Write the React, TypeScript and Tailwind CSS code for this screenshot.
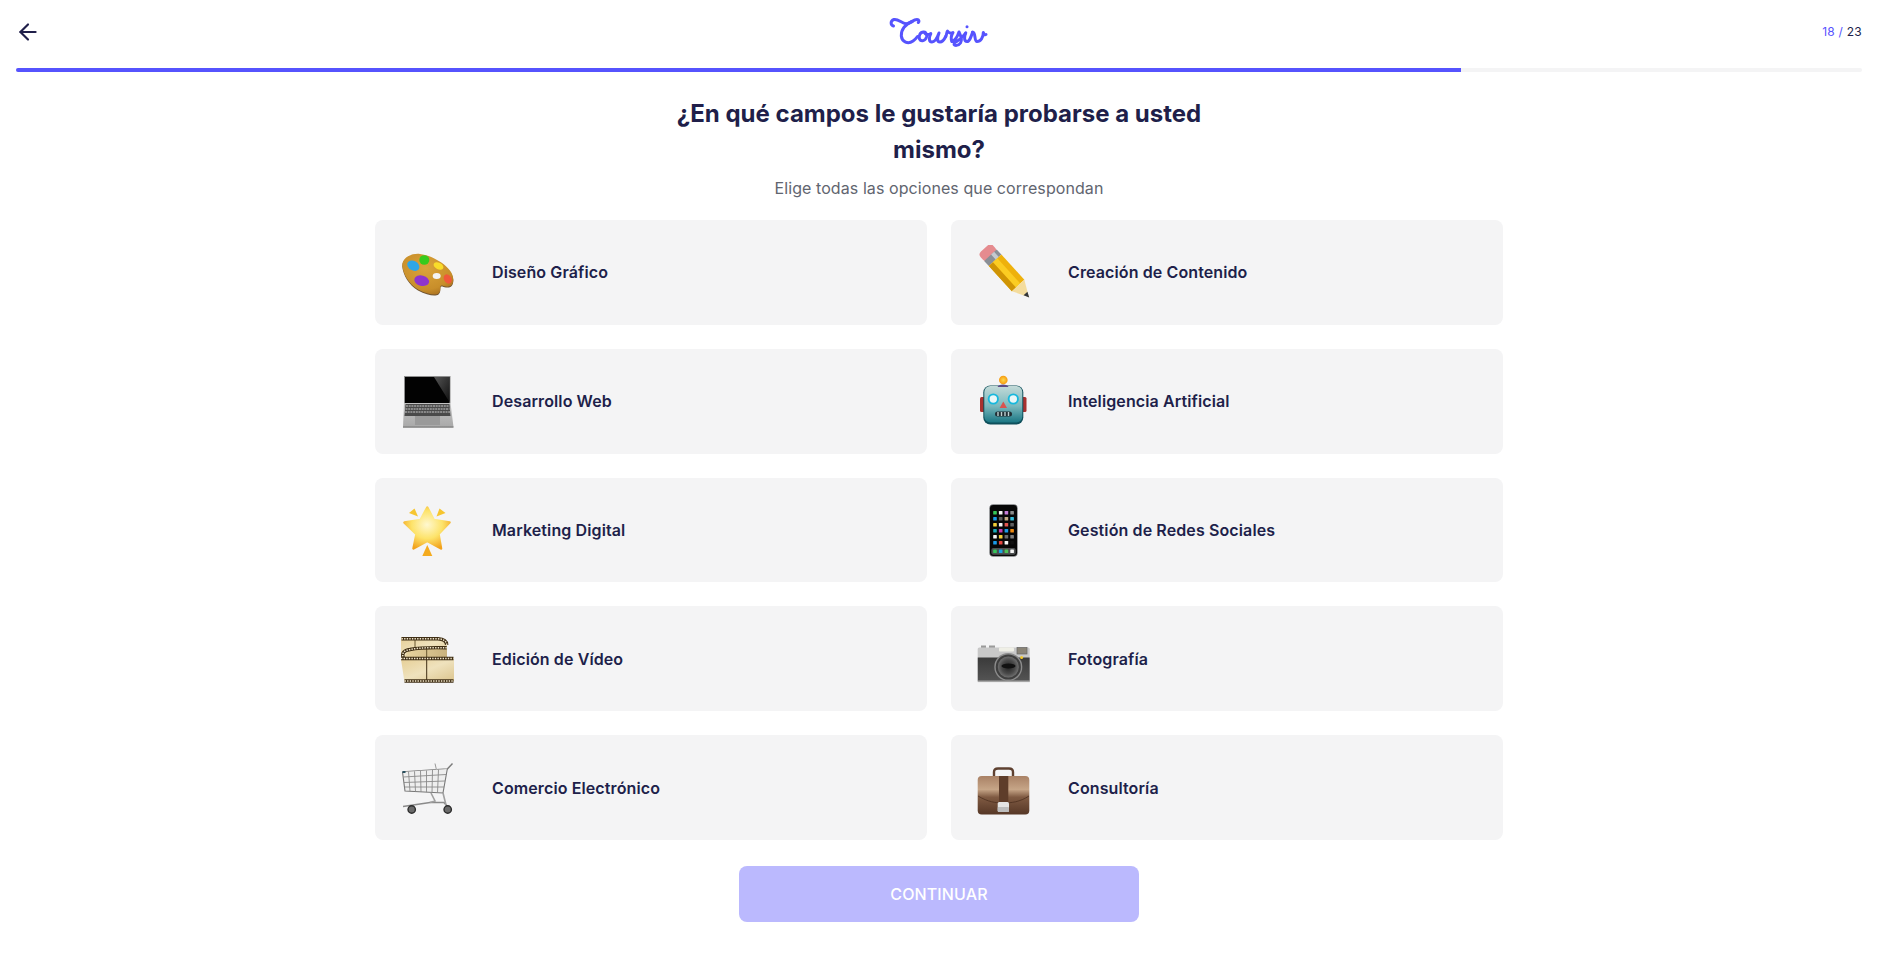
import type { ReactNode } from "react"
import { ArrowLeft } from "lucide-react"

function Logo() {
  return (
    <svg className="-mt-0.5" width="100" height="34" viewBox="0 0 100 34" fill="none" stroke="#5653fe" strokeWidth="3" strokeLinecap="round" strokeLinejoin="round" role="img" aria-label="Coursiv">
      <path d="M4.500 12C1.500 11 1 7 5 5.500C9 4.500 13 9.500 17 9.700C21 9.900 24 5.500 28 5.500C30 5.500 30.500 7.500 29.300 8.500" />
      <path d="M23.300 7.500C16 10 12 16 12.300 22C13 28 19 30.500 24 27C26 25.500 27.500 24 28.500 22.500" />
      <path d="M34.500 18C31 18 29.500 22 30.500 25C32 28 36.500 27 37.500 23C38 20.500 37 18 35 18C36.500 21 39.500 21 41.700 19.700" />
      <path d="M41.700 19.700C40 23 39.500 28 43 28C46 28 48.500 23 50 19C48.500 23 47.500 28 51 28C53.500 28 55.500 25 56.700 22.500" />
      <path d="M56.700 22.500C58 20 57.500 18 58.500 17C60 19.500 62.500 19.500 64 18.500C62.500 21 61.500 24.500 63 27.500" />
      <path d="M63 27.500C66 26.500 68.500 22.500 70 18C72 22 73.500 26 71.500 29C69.500 32 65 32 65 30C65 28 71 27.500 76.700 19" />
      <path d="M76.700 19C75 23 75 27.500 78 27.500C80.500 27.500 82 23 83.500 18.500" />
      <path d="M83.500 18C87 18 85 27.500 88 27.500C91.500 27.500 94.500 23.500 94.300 18.500C95 20.500 96 21 97 20.500" />
      <circle cx="78" cy="12.800" r="1.500" fill="#5653fe" stroke="none" />
    </svg>
  )
}

function Palette() {
  const outline = "M2.300 20.500C2 13 11 8 20 9C33 10.500 53 22 53.300 34C53.500 40 50 42.500 46 41.500C43 41 41 39.500 40.500 41.500C40 44 41 46 38.500 48.500C35 51 27 49 18 44.500C9 39 3 29 2.300 20.500Z"
  return (
    <svg width="54" height="54" viewBox="0 0 54 54">
      <defs>
        <radialGradient id="pal" cx=".45" cy=".35" r=".7">
          <stop offset="0" stopColor="#dba43a" />
          <stop offset=".75" stopColor="#c88e2a" />
          <stop offset="1" stopColor="#a9701f" />
        </radialGradient>
      </defs>
      <path d={outline} fill="#6f5433" transform="translate(0 .9)" />
      <path d={outline} fill="url(#pal)" />
      <ellipse cx="13.300" cy="20.700" rx="6.500" ry="4.800" fill="#2ea6e6" transform="rotate(30 13.300 20.700)" />
      <ellipse cx="24.300" cy="15" rx="5" ry="4.800" fill="#37cb1c" />
      <ellipse cx="38.500" cy="21" rx="5.200" ry="3.300" fill="#f9dc2a" transform="rotate(25 38.500 21)" />
      <ellipse cx="21.700" cy="35.700" rx="7.500" ry="5.200" fill="#8e35cc" transform="rotate(15 21.700 35.700)" />
      <ellipse cx="47.700" cy="34" rx="3.700" ry="5" fill="#f0583a" transform="rotate(-30 47.700 34)" />
      <ellipse cx="36.700" cy="31" rx="4" ry="3" fill="#f4f4f5" />
    </svg>
  )
}

function Pencil() {
  return (
    <svg width="54" height="54" viewBox="0 0 54 54">
      <g transform="translate(11 6.500) rotate(47.500)">
        <rect x="-4" y="-8.500" width="11" height="17" rx="4" fill="#e58b8f" />
        <rect x="5" y="-8.500" width="7" height="17" fill="#8a8f96" />
        <rect x="5" y="-5" width="7" height="4" fill="#c4c9cf" />
        <path d="M12 -8.500H46V8.500H12Z" fill="#eeb10c" />
        <path d="M12 -3H46V3H12Z" fill="#fbcc22" />
        <path d="M12 3H46V8.500H12Z" fill="#cf9405" />
        <path d="M46 -8.500L62 0L46 8.500Z" fill="#f4dc9d" />
        <path d="M57 -2.600L62.500 0L57 2.600Z" fill="#33363b" />
      </g>
    </svg>
  )
}

function Laptop() {
  return (
    <svg width="54" height="54" viewBox="0 0 54 54">
      <defs>
        <linearGradient id="deck" x1="0" y1="0" x2="0" y2="1">
          <stop offset="0" stopColor="#c4c4c4" />
          <stop offset="1" stopColor="#a9a9a9" />
        </linearGradient>
        <linearGradient id="glare" x1="0" y1="0" x2="1" y2="1">
          <stop offset="0" stopColor="#555" />
          <stop offset="1" stopColor="#111" />
        </linearGradient>
      </defs>
      <rect x="4" y="2" width="46.500" height="27" fill="#8f8f8f" />
      <rect x="5" y="3" width="44.500" height="26" fill="#020202" />
      <path d="M34 3H49.500V28Z" fill="url(#glare)" />
      <path d="M4 29H50.500L53.500 53H3Z" fill="url(#deck)" />
      <path d="M5.500 30H49.500L50.500 42H4.500Z" fill="#4a4a4a" />
      <path d="M6 32H49M5.500 35H49.500M5 38H50" stroke="#c9c9c9" strokeWidth="1" strokeDasharray="2 .7" />
      <rect x="15" y="42" width="25" height="9" fill="#9a9a9a" />
      <rect x="3" y="52.500" width="50.500" height="1.200" fill="#777" />
    </svg>
  )
}

function Robot() {
  return (
    <svg width="54" height="54" viewBox="0 0 54 54">
      <defs>
        <linearGradient id="head" x1="0" y1="0" x2="0" y2="1">
          <stop offset="0" stopColor="#c3dad8" />
          <stop offset=".55" stopColor="#7ab8bd" />
          <stop offset="1" stopColor="#1a7683" />
        </linearGradient>
        <radialGradient id="ball">
          <stop offset="0" stopColor="#ffd84a" />
          <stop offset="1" stopColor="#f59a10" />
        </radialGradient>
      </defs>
      <rect x="4" y="23" width="5" height="15" rx="1.500" fill="#a8312f" />
      <rect x="45.500" y="23" width="5" height="15" rx="1.500" fill="#a8312f" />
      <rect x="7.300" y="11.500" width="40" height="39" rx="7" fill="#0e4f5b" />
      <rect x="8.300" y="12" width="38" height="36.500" rx="6" fill="url(#head)" />
      <path d="M21.500 13C22 9.500 32 9.500 32.500 13Z" fill="#5d4a87" />
      <circle cx="27.300" cy="6" r="4.300" fill="url(#ball)" />
      <circle cx="17.300" cy="25" r="5.600" fill="#16b8dd" />
      <circle cx="37.300" cy="25" r="5.600" fill="#16b8dd" />
      <circle cx="17.300" cy="25" r="3.700" fill="#e9f7f8" />
      <circle cx="37.300" cy="25" r="3.700" fill="#e9f7f8" />
      <path d="M27.300 27.500L31 34H23.600Z" fill="#d9534f" />
      <rect x="19" y="37.500" width="17" height="5" rx="2.500" fill="#222f35" />
      <path d="M22 38V42M25.500 38V42M29 38V42M32.500 38V42" stroke="#bcd0d2" strokeWidth="1.400" />
    </svg>
  )
}

function Star() {
  return (
    <svg width="54" height="54" viewBox="0 0 54 54">
      <defs>
        <radialGradient id="star" cx=".5" cy=".42" r=".62">
          <stop offset="0" stopColor="#fff8d0" />
          <stop offset=".55" stopColor="#fde36a" />
          <stop offset="1" stopColor="#f2a21c" />
        </radialGradient>
      </defs>
      <path d="M27.300 4.500L33.800 17L49.500 19.500L38.500 31L41 45.500L27.300 38L13.500 45.500L16.500 31L4.500 19.500L20.500 17Z" fill="url(#star)" stroke="url(#star)" strokeWidth="2.500" strokeLinejoin="round" />
      <path d="M9 10L14.500 5.500L18 13.500Z" fill="#f6c52f" />
      <path d="M36.500 13.500L39.500 5.500L45.500 10Z" fill="#f6c52f" />
      <path d="M27.300 42L32.300 53H22.300Z" fill="#f4ab1f" />
    </svg>
  )
}

function Phone() {
  const rows = [
    ["#35c659", "#f5f5f5", "#c77dd8", "#8b8b8b"],
    ["#1b9ae8", "#5c5c5c", "#c4ab85", "#35bcd8"],
    ["#f4cf38", "#f5f5f5", "#e2554d", "#5f5f5f"],
    ["#19a9b8", "#c43bb0", "#1b9ae8", "#ee8a12"],
    ["#f5f5f5", "#f4cf38", "#6d6d6d", "#7d7d7d"],
    ["#1b9ae8", "#e2453f", "#f5f5f5", "#111111"],
  ]
  const dock = ["#35c659", "#1ba7e0", "#4cc455", "#f5f5f5"]
  const xs = [17.200, 22.900, 28.600, 34.300]
  return (
    <svg width="54" height="54" viewBox="0 0 54 54">
      <rect x="13.300" y="1.300" width="28.400" height="52.400" rx="4" fill="#77797c" />
      <rect x="14" y="2" width="27" height="51" rx="3.400" fill="#070707" />
      {rows.map((row, r) =>
        row.map((color, c) => <rect key={`${r}-${c}`} x={xs[c]} y={7.900 + r * 6} width="3.600" height="3.600" rx=".6" fill={color} />)
      )}
      <rect x="15.300" y="45" width="24.400" height="6.800" rx="2" fill="#4c4f50" />
      {dock.map((color, c) => <rect key={c} x={xs[c]} y="46.500" width="3.600" height="3.600" rx=".6" fill={color} />)}
    </svg>
  )
}

// one strip of film: a dark band with a row of pale sprocket holes over it
function Strip({ d }: { d: string }) {
  return (
    <>
      <path d={d} fill="none" stroke="#3f2e14" strokeWidth="3.400" />
      <path d={d} fill="none" stroke="#f3e9cf" strokeWidth="1.500" strokeDasharray="1.400 1.200" />
    </>
  )
}

function Film() {
  return (
    <svg width="54" height="54" viewBox="0 0 54 54">
      <defs>
        <linearGradient id="film" x1="0" y1="0" x2="1" y2="1">
          <stop offset="0" stopColor="#e6cf97" />
          <stop offset=".5" stopColor="#efe2bd" />
          <stop offset="1" stopColor="#dcc58f" />
        </linearGradient>
        <linearGradient id="filmback" x1="0" y1="0" x2="1" y2="0">
          <stop offset="0" stopColor="#e8d4a0" />
          <stop offset="1" stopColor="#c9b27e" />
        </linearGradient>
      </defs>
      <path d="M1 5.500H38C44 6 47 9 47 13V26H1Z" fill="url(#film)" />
      <path d="M8 18C20 15.500 35 15.500 47 15.800V28H4Z" fill="url(#filmback)" />
      <path d="M15 8V16M26.700 16V26" stroke="#5a4722" strokeWidth=".9" />
      <Strip d="M1.500 6.800H38C43 7 46.500 9 46.700 13" />
      <Strip d="M46.700 15.800C35 15.500 20 15.500 10 17.500C4 18.500 1.500 21 3.300 25.800" />
      <path d="M1 27H54V49H4.300C3 40 2 34 1 27Z" fill="url(#film)" />
      <path d="M26.700 27V49" stroke="#3f2e14" strokeWidth="1" />
      <Strip d="M1 26.500H53.500" />
      <Strip d="M4.500 49H53.500" />
    </svg>
  )
}

function Camera() {
  return (
    <svg width="54" height="54" viewBox="0 0 54 54">
      <defs>
        <linearGradient id="cambody" x1="0" y1="0" x2="0" y2="1">
          <stop offset="0" stopColor="#3a3a3a" />
          <stop offset="1" stopColor="#555" />
        </linearGradient>
        <radialGradient id="lens">
          <stop offset="0" stopColor="#222" />
          <stop offset=".65" stopColor="#4a4a4a" />
          <stop offset="1" stopColor="#6f6f6f" />
        </radialGradient>
      </defs>
      <rect x="5" y="13.500" width="5" height="4" fill="#9a9a9a" />
      <rect x="13" y="13.500" width="6" height="4" fill="#9a9a9a" />
      <rect x="1.700" y="15.500" width="52" height="11" rx="1.500" fill="#c8c8c8" />
      <rect x="23" y="15.500" width="15" height="4" rx="1" fill="#efefe6" />
      <rect x="41" y="15.500" width="10" height="6.500" fill="#8a8477" stroke="#666" strokeWidth=".7" />
      <path d="M1.700 25.500H53.700V48C53.700 49.500 53 50 52 50H3.500C2.500 50 1.700 49.500 1.700 48Z" fill="url(#cambody)" />
      <rect x="1.700" y="48.500" width="52" height="1.600" fill="#a5a5a5" />
      <circle cx="32.300" cy="35" r="14" fill="#8c8c8c" />
      <circle cx="32.300" cy="35" r="12.600" fill="#3f3f3f" />
      <circle cx="32.300" cy="35" r="10.500" fill="url(#lens)" />
      <ellipse cx="32.500" cy="34" rx="7" ry="2.500" fill="#111" />
      <circle cx="45.600" cy="25.500" r="1.500" fill="#f0c72c" />
    </svg>
  )
}

function Cart() {
  return (
    <svg width="54" height="54" viewBox="0 0 54 54" fill="none">
      <path d="M2.500 11L47.300 8L52.500 2.500" stroke="#7b7b7b" strokeWidth="1.400" />
      <path d="M35 2.500L36.500 9" stroke="#999" strokeWidth="1" />
      <path d="M2.500 11L5 30L43 32L47.300 8" fill="#eeeeee" stroke="#777" strokeWidth="1.100" />
      <path d="M8.500 10.700L10 30.300M14.500 10.300L15.500 30.600M20.500 9.900L21 30.900M26.500 9.500L26.500 31.200M32.500 9L32 31.500M38.500 8.600L37.500 31.700" stroke="#8a8a8a" strokeWidth=".9" />
      <path d="M3.300 16L46 13.500M4 21.500L45 20M4.500 26L44 26" stroke="#8a8a8a" strokeWidth=".9" />
      <path d="M2.500 11H5.500" stroke="#28505f" strokeWidth="2" />
      <path d="M3 45.500L30 41.500H44L47 45" stroke="#8a8a8a" strokeWidth="1.700" />
      <path d="M43 32L46 44M31 32L35 40L30 41.500" stroke="#a0a0a0" strokeWidth="1.600" />
      <circle cx="11.700" cy="48.500" r="3.700" fill="#6a6a6a" stroke="#2c2c2c" strokeWidth="1.400" />
      <circle cx="47.700" cy="48.500" r="3.700" fill="#6a6a6a" stroke="#2c2c2c" strokeWidth="1.400" />
    </svg>
  )
}

function Briefcase() {
  return (
    <svg width="54" height="54" viewBox="0 0 54 54">
      <defs>
        <linearGradient id="bag" x1="0" y1="0" x2="0" y2="1">
          <stop offset="0" stopColor="#a98165" />
          <stop offset=".35" stopColor="#c6a587" />
          <stop offset=".55" stopColor="#7f5a42" />
          <stop offset="1" stopColor="#563726" />
        </linearGradient>
      </defs>
      <path d="M18 16V11C18 8 20 7.500 22 7.500H33C35.500 7.500 37 8 37 11V16" fill="none" stroke="#5e4030" strokeWidth="2.400" />
      <rect x="1.700" y="15" width="51.600" height="38.500" rx="4" fill="url(#bag)" />
      <path d="M2 35C12 41 20 42 27 42C35 42 44 41 53 35" fill="none" stroke="#4d3020" strokeWidth=".8" />
      <rect x="23" y="15" width="9.300" height="26" fill="#5e3d2a" />
      <rect x="21.700" y="41" width="11.300" height="10" rx="1.500" fill="#e4e4e4" />
      <rect x="21.700" y="46" width="11.300" height="5" rx="1" fill="#bdbdbd" />
    </svg>
  )
}

const options: { label: string; icon: ReactNode }[] = [
  { label: "Diseño Gráfico", icon: <Palette /> },
  { label: "Creación de Contenido", icon: <Pencil /> },
  { label: "Desarrollo Web", icon: <Laptop /> },
  { label: "Inteligencia Artificial", icon: <Robot /> },
  { label: "Marketing Digital", icon: <Star /> },
  { label: "Gestión de Redes Sociales", icon: <Phone /> },
  { label: "Edición de Vídeo", icon: <Film /> },
  { label: "Fotografía", icon: <Camera /> },
  { label: "Comercio Electrónico", icon: <Cart /> },
  { label: "Consultoría", icon: <Briefcase /> },
]

export default function App() {
  return (
    <div className="h-[955px] overflow-hidden bg-white font-['Inter',sans-serif] text-[#201f4a]">
      <header className="flex h-[68px] items-center justify-between px-4 pb-[9px] pt-[5px]">
        <button className="-ml-px w-[60px]" aria-label="Volver">
          <ArrowLeft size={26} strokeWidth={2} />
        </button>
        <Logo />
        <div className="w-[60px] text-right text-xs tracking-[0.02em] text-[#5653fe]">
          18 / <span className="text-[#201f4a]">23</span>
        </div>
      </header>

      <div className="mx-4 h-1 overflow-hidden rounded-full bg-[#f4f4f5]">
        <div className="h-full w-[1445px] bg-[#5653fe]" />
      </div>

      <main className="mx-auto flex w-[1128px] flex-col items-center pt-6">
        <h1 className="w-[560px] text-center text-2xl font-bold leading-9">
          ¿En qué campos le gustaría probarse a usted mismo?
        </h1>
        <p className="mt-2 text-base tracking-[0.005em] text-[#61656f]">Elige todas las opciones que correspondan</p>

        <div className="mt-5 grid grid-cols-2 gap-6">
          {options.map((option) => (
            <div key={option.label} className="flex h-[104.8px] w-[552px] items-center gap-[38px] rounded-lg bg-[#f4f4f5] pl-[25px]">
              {option.icon}
              <span className="text-base font-semibold tracking-[0.007em]">{option.label}</span>
            </div>
          ))}
        </div>

        <button className="mt-[26.5px] h-14 w-[400px] rounded-lg bg-[#bbb9fe] text-base font-medium tracking-[0.008em] text-white">
          CONTINUAR
        </button>
      </main>
    </div>
  )
}
